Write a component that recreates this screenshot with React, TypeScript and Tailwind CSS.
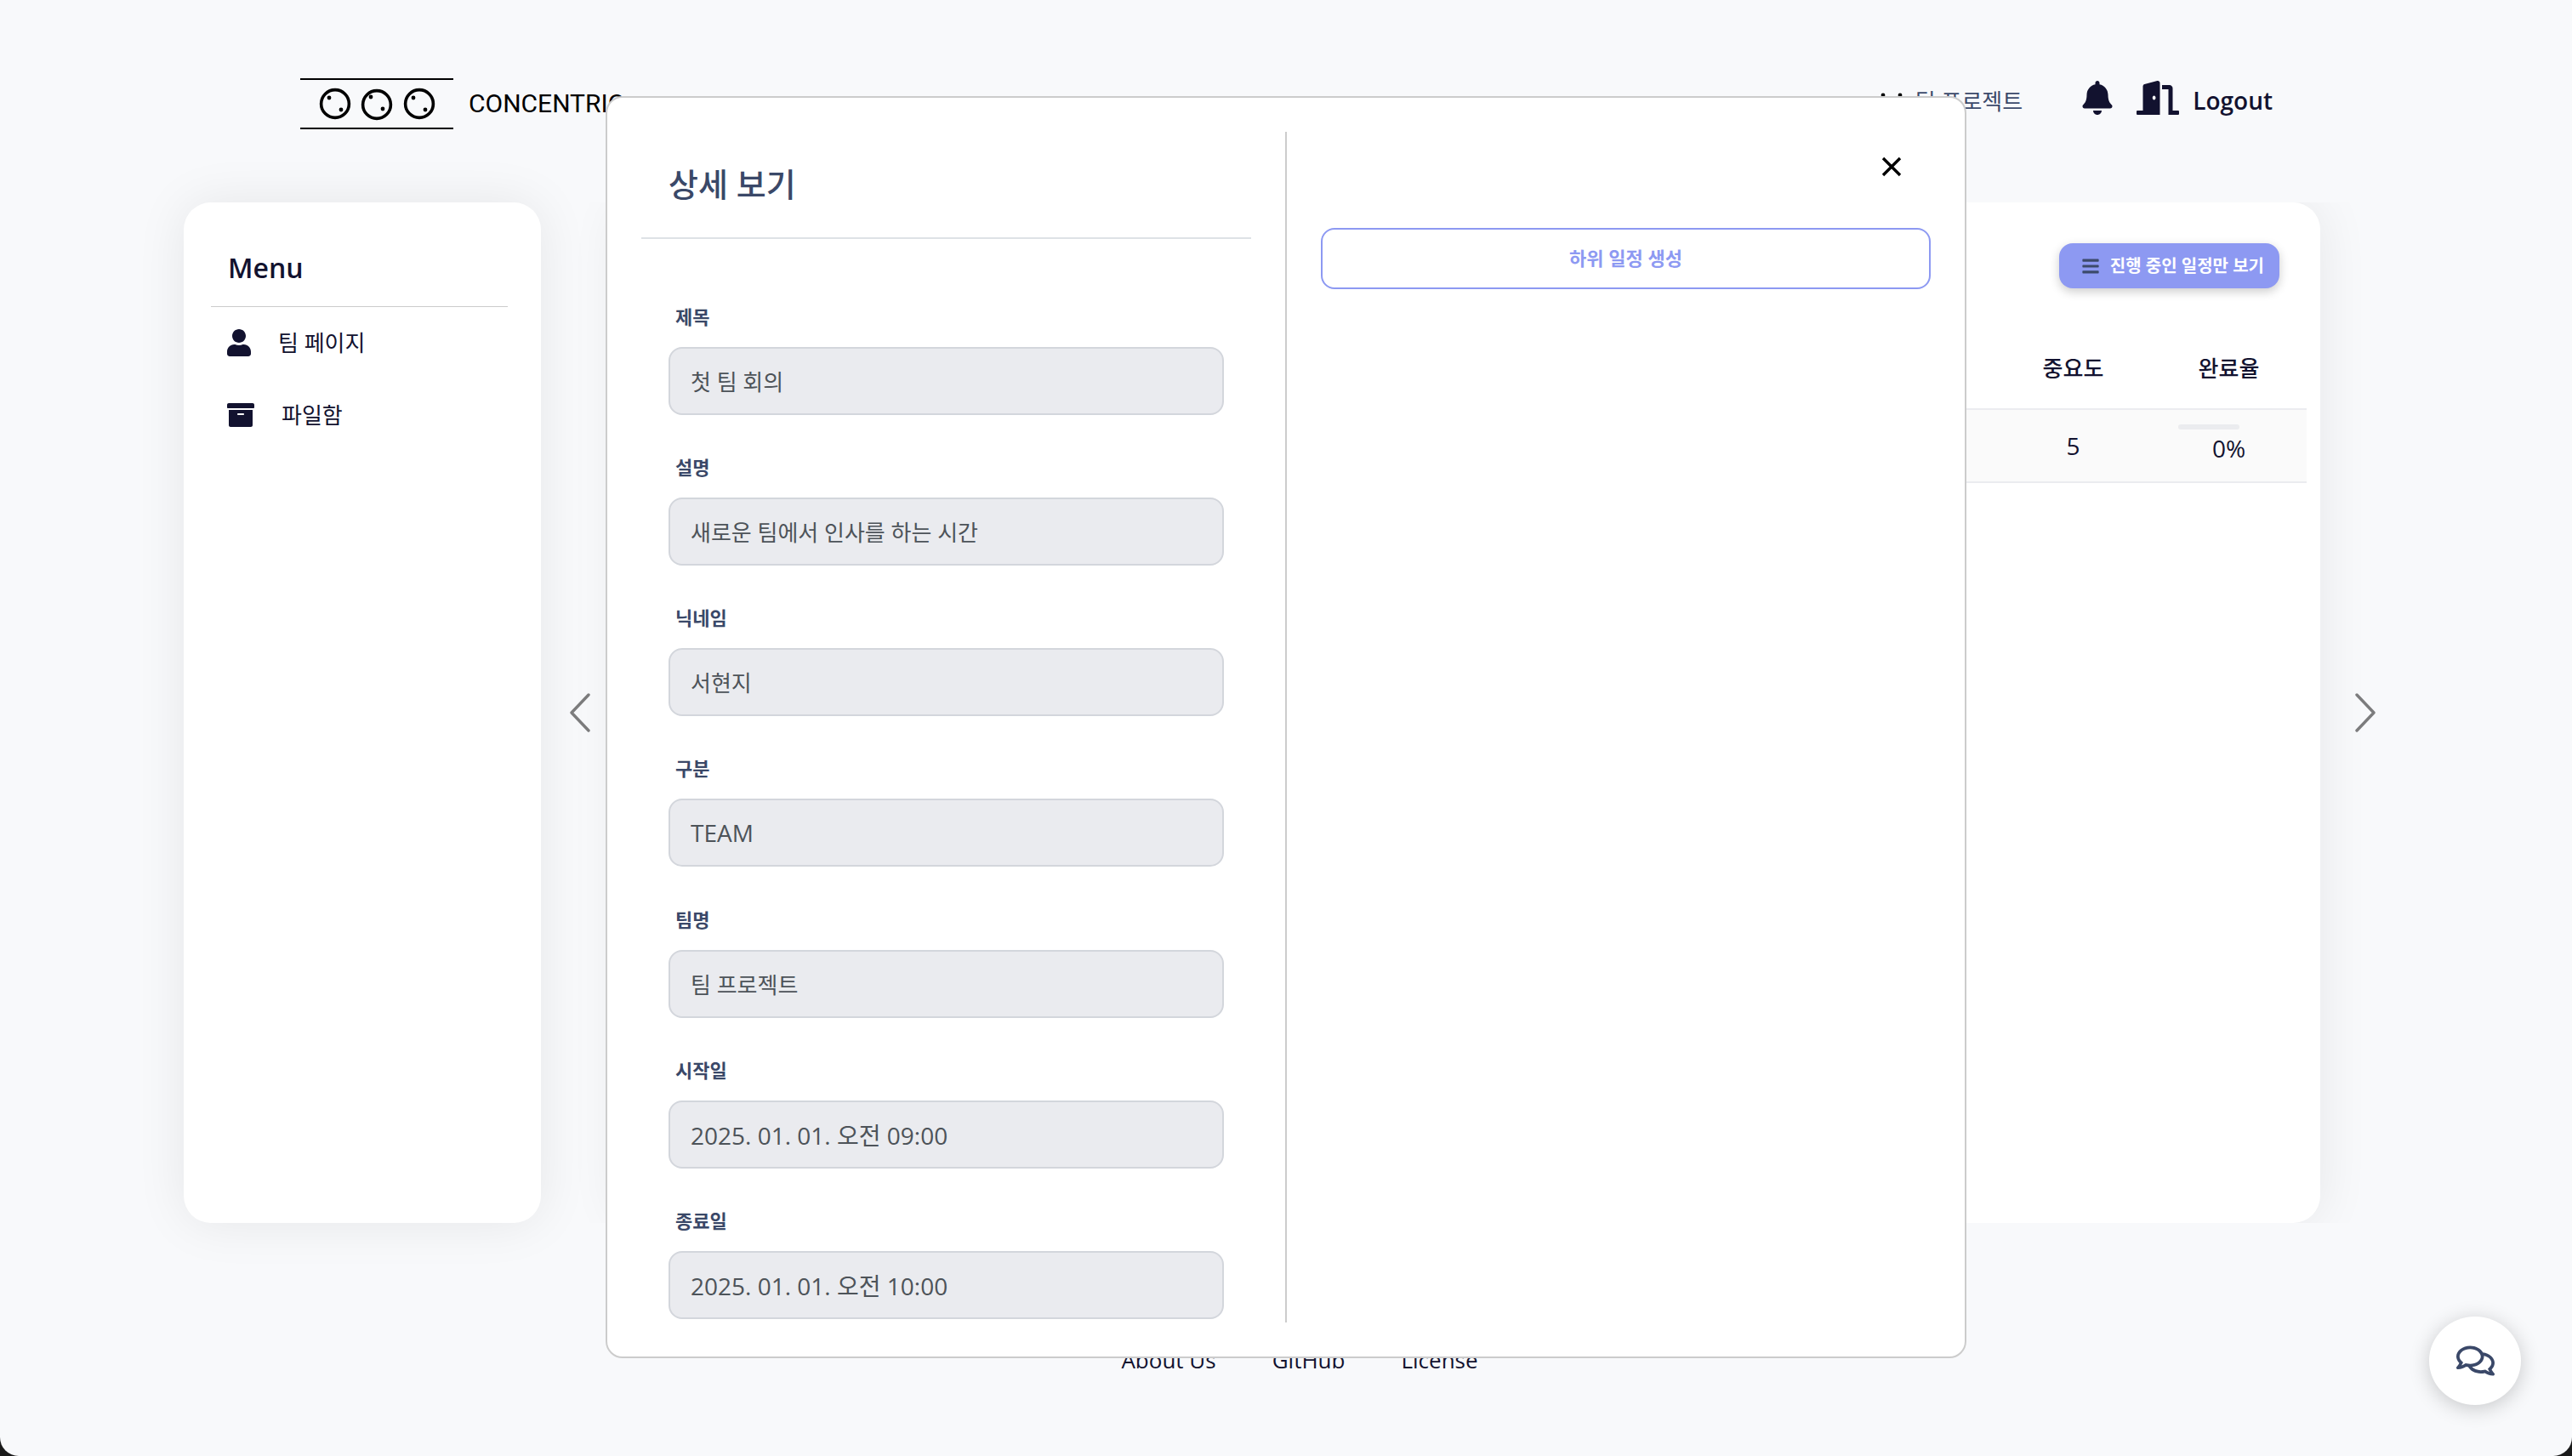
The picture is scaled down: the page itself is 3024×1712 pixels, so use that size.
import { FaArchive, FaBars, FaBell, FaDoorOpen, FaRegComments, FaUser } from "react-icons/fa";

const fields = [
  { id: "title", label: "제목", value: "첫 팀 회의", size: "text-[26px]" },
  { id: "description", label: "설명", value: "새로운 팀에서 인사를 하는 시간", size: "text-[26px]" },
  { id: "nickname", label: "닉네임", value: "서현지", size: "text-[26px]" },
  { id: "category", label: "구분", value: "TEAM", size: "text-[28px]" },
  { id: "team", label: "팀명", value: "팀 프로젝트", size: "text-[26px]" },
  { id: "start", label: "시작일", value: "2025. 01. 01. 오전 09:00", size: "text-[28px]" },
  { id: "end", label: "종료일", value: "2025. 01. 01. 오전 10:00", size: "text-[28px]" },
];

function Logo() {
  return (
    <a href="#home" className="flex items-center gap-[18px] text-black">
      <svg width="180" height="62" viewBox="0 0 180 62" fill="none" stroke="currentColor" aria-hidden="true">
        <path d="M0 2H180M0 60H180" strokeWidth="2" />
        <g strokeWidth="3.6">
          <circle cx="41" cy="31" r="16.4" />
          <circle cx="90" cy="32" r="16.4" />
          <circle cx="140" cy="31" r="16.4" />
        </g>
        <g fill="currentColor" stroke="none">
          <circle cx="34" cy="24" r="2.4" />
          <circle cx="48" cy="38" r="2.4" />
          <circle cx="83" cy="23" r="2.4" />
          <circle cx="97" cy="37" r="2.4" />
          <circle cx="133" cy="24" r="2.4" />
          <circle cx="147" cy="38" r="2.4" />
        </g>
      </svg>
      <span className="font-[Roboto] text-[30px] leading-none">CONCENTRIC</span>
    </a>
  );
}

function TeamIcon() {
  return (
    <svg width="32" height="20" viewBox="0 0 32 20" className="text-black" fill="currentColor" aria-hidden="true">
      <circle cx="6" cy="3" r="2.4" />
      <circle cx="26" cy="3" r="2.4" />
      <path d="M0 20V14a6 6 0 0 1 12 0v6ZM20 20V14a6 6 0 0 1 12 0v6Z" />
    </svg>
  );
}

function Header() {
  return (
    <header className="flex h-[238px] items-start justify-between pr-[352px] pl-[353px]">
      <div className="pt-[91px]">
        <Logo />
      </div>
      <nav className="flex items-start pt-[95px]">
        <a href="#team" className="flex items-center gap-3 pt-1 text-[26px] leading-10 text-[#3c4a6b]">
          <TeamIcon />팀 프로젝트
        </a>
        <button type="button" aria-label="알림" className="ml-[68px]">
          <FaBell size={40} />
        </button>
        <button type="button" className="ml-[26px] flex items-start gap-4 text-[28px] leading-10 font-semibold">
          <FaDoorOpen size={40} className="w-[50px]" />
          <span className="pt-[3px]">Logout</span>
        </button>
      </nav>
    </header>
  );
}

function SideMenu() {
  return (
    <aside className="w-[420px] shrink-0 rounded-[32px] bg-white pt-[53px] pr-[39px] pl-8 shadow-[0_0_60px_rgba(0,0,0,0.08)]">
      <h2 className="border-b border-[#cccccc] pb-[21px] pl-5 text-[32px] leading-12 font-semibold">Menu</h2>
      <ul className="flex flex-col gap-[45px] pt-[22px] pl-[19px] text-[26px] leading-10">
        <li>
          <a href="#team-page" className="flex items-center gap-8">
            <FaUser size={32} className="w-7" />팀 페이지
          </a>
        </li>
        <li>
          <a href="#files" className="flex items-center gap-8">
            <FaArchive size={32} />
            파일함
          </a>
        </li>
      </ul>
    </aside>
  );
}

function Chevron({ flip = false }: { flip?: boolean }) {
  return (
    <svg width="26" height="46" viewBox="0 0 26 46" fill="none" className={flip ? "rotate-180" : ""} aria-hidden="true">
      <path d="M23 2L3 23L23 44" stroke="#7c7c7d" strokeWidth="3.4" strokeLinecap="round" strokeLinejoin="round" />
    </svg>
  );
}

function Schedule() {
  return (
    <div className="flex min-w-0 flex-1 overflow-y-clip">
      <section className="min-w-0 flex-1 rounded-[32px] bg-white px-4 pt-12 shadow-[0_0_60px_rgba(0,0,0,0.08)]">
        <div className="flex justify-end pr-8">
          <button
            type="button"
            className="flex h-[53px] items-center gap-3 rounded-2xl bg-[#8d99f2] pr-[18px] pl-[26px] text-[20px] font-bold text-white shadow-[0_4px_12px_rgba(0,0,0,0.2)]"
          >
            <FaBars size={22} className="text-[#3c4a6b]" />
            진행 중인 일정만 보기
          </button>
        </div>
        <table className="mt-[46px] w-full table-fixed text-center">
          <thead>
            <tr className="h-24 text-[26px]">
              <th className="w-auto" />
              <th className="w-[183px] pt-[2px] font-medium">중요도</th>
              <th className="w-[183px] pt-[2px] font-medium">완료율</th>
            </tr>
          </thead>
          <tbody>
            <tr className="h-[86px] border-y-2 border-[#ebecf0] bg-[#fafafa] text-[28px]">
              <td />
              <td>5</td>
              <td>
                <div className="ml-8 h-[6px] w-[72px] rounded-full bg-[#ebecef]" />
                <div className="pt-[2px] pb-[2px] leading-10">0%</div>
              </td>
            </tr>
          </tbody>
        </table>
      </section>
    </div>
  );
}

function DetailModal() {
  return (
    <div
      role="dialog"
      aria-label="상세 보기"
      className="absolute top-[113px] left-1/2 flex h-[1484px] w-[1600px] -translate-x-1/2 rounded-[20px] border-2 border-[#cccccc] bg-white p-[40px]"
    >
      <div className="flex min-w-0 flex-1 flex-col pr-10">
        <h1 className="border-b-2 border-[#dee2e6] px-8 pt-[33px] pb-[35px] text-[38px] leading-14 font-medium text-[#3a4868]">
          상세 보기
        </h1>
        <form className="flex flex-1 flex-col justify-between px-8 pt-[73px] pb-1">
          {fields.map((f) => (
            <div key={f.id} className="flex flex-col">
              <label htmlFor={f.id} className="pb-[18px] pl-2 text-[22px] leading-9 font-bold text-[#3a4868]">
                {f.label}
              </label>
              <input
                id={f.id}
                defaultValue={f.value}
                disabled
                className={`h-20 rounded-2xl border-2 border-[#d3d6dc] bg-[#eaebef] px-6 text-[#4d5359] ${f.size}`}
              />
            </div>
          ))}
        </form>
      </div>
      <div className="flex min-w-0 flex-1 flex-col border-l-2 border-[#cccccc] pl-10">
        <div className="flex justify-end pt-[29px] pr-[34px]">
          <button type="button" aria-label="닫기">
            <svg width="24" height="24" viewBox="0 0 24 24" stroke="#000" strokeWidth="3.4" aria-hidden="true">
              <path d="M2 2L22 22M22 2L2 22" />
            </svg>
          </button>
        </div>
        <button
          type="button"
          className="mt-[60px] h-[72px] rounded-2xl border-2 border-[#8d99f2] pb-[2px] text-[22px] font-bold text-[#8d99f2]"
        >
          하위 일정 생성
        </button>
      </div>
    </div>
  );
}

export default function App() {
  return (
    <div className="bg-[#1a1a1a] font-['Open_Sans','Noto_Sans_CJK_KR',sans-serif] text-[#12122f]">
      <div className="relative min-h-screen overflow-hidden rounded-b-[22px] bg-[#f8f9fb]">
        <Header />
        <main className="flex h-[1200px] pr-[230px] pl-[216px]">
          <SideMenu />
          <button type="button" aria-label="이전" className="flex w-[92px] shrink-0 items-center justify-center">
            <Chevron />
          </button>
          <Schedule />
          <button type="button" aria-label="다음" className="flex w-[66px] shrink-0 items-center justify-end">
            <Chevron flip />
          </button>
        </main>
        <footer className="flex justify-center gap-[66px] pt-[141px] pl-8 text-[26px] leading-10">
          <a href="#about">About Us</a>
          <a href="#github">GitHub</a>
          <a href="#license">License</a>
        </footer>
        <DetailModal />
        <button
          type="button"
          aria-label="채팅"
          className="fixed right-[60px] bottom-[60px] flex h-[104px] w-[108px] items-center justify-center rounded-[50%] bg-white text-[#3a4868] shadow-[0_4px_24px_rgba(0,0,0,0.2)]"
        >
          <FaRegComments size={40} className="w-[45px]" />
        </button>
      </div>
    </div>
  );
}
